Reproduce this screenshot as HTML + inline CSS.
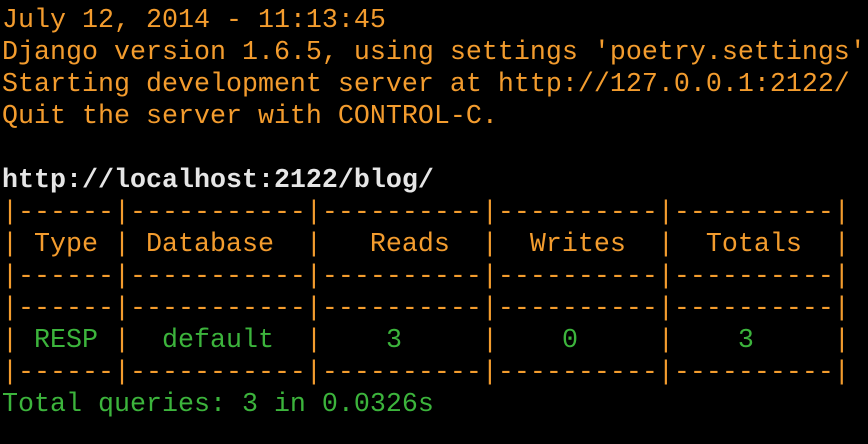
<!DOCTYPE html>
<html><head><meta charset="utf-8"><style>
html,body{margin:0;padding:0;background:#000;width:868px;height:444px;overflow:hidden}
pre{margin:0;position:absolute;left:2px;top:5px;font-family:"Liberation Mono",monospace;font-size:26.67px;line-height:32px;color:#f39c2e}
.w{color:#e6e6e6;font-weight:bold}
.g{color:#3cb43c}
</style></head><body><pre>July 12, 2014 - 11:13:45
Django version 1.6.5, using settings 'poetry.settings'
Starting development server at http://127.0.0.1:2122/
Quit the server with CONTROL-C.

<span class="w">http://localhost:2122/blog/</span>
|------|-----------|----------|----------|----------|
| Type | Database  |   Reads  |  Writes  |  Totals  |
|------|-----------|----------|----------|----------|
|------|-----------|----------|----------|----------|
| <span class="g">RESP</span> |  <span class="g">default</span>  |    <span class="g">3</span>     |    <span class="g">0</span>     |    <span class="g">3</span>     |
|------|-----------|----------|----------|----------|
<span class="g">Total queries: 3 in 0.0326s</span></pre></body></html>
